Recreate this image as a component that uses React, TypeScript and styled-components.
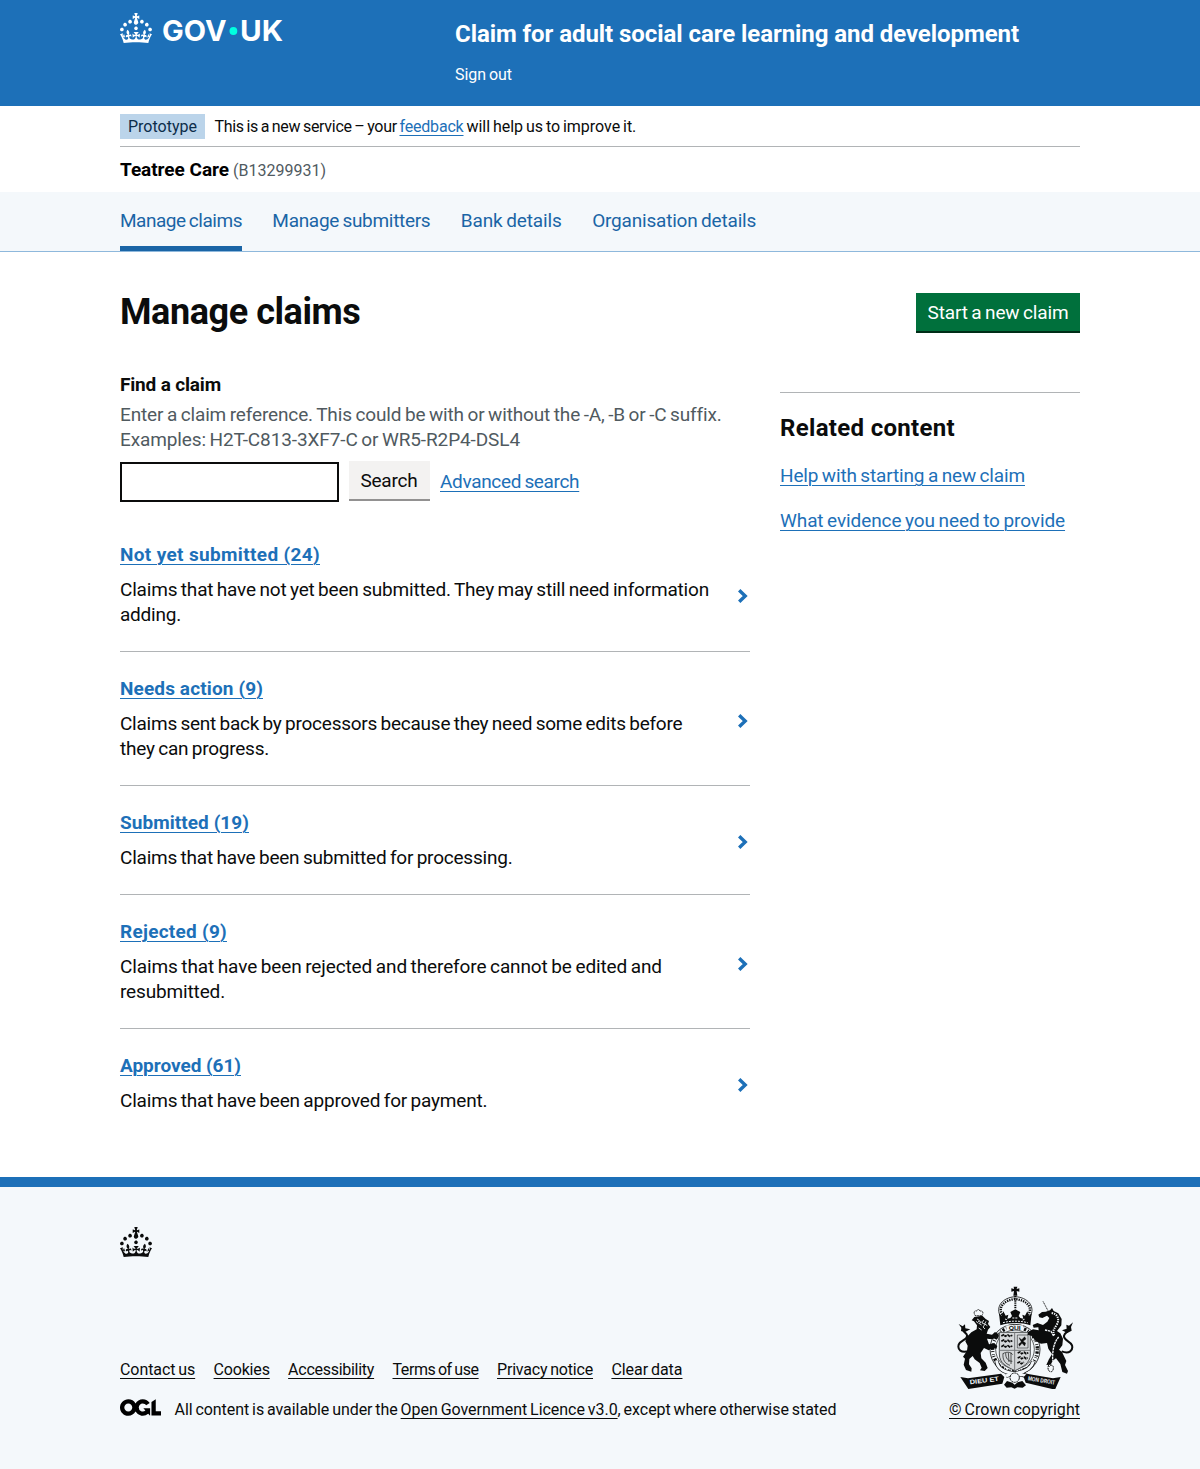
import React from "react";
import styled, { createGlobalStyle } from "styled-components";

const Global = createGlobalStyle`
  * { box-sizing: border-box; }
  body { margin: 0; background: #fff; color: #0b0c0c; font-family: Roboto, "Liberation Sans", sans-serif; font-size: 19px; line-height: 25px; }
  h1, h2, p, ul { margin: 0; padding: 0; }
  ul { list-style: none; }
`;

const Tracked = styled.span<{ $ls: number; $ws: number }>`
  letter-spacing: ${p => p.$ls}px;
  word-spacing: ${p => p.$ws}px;
  white-space: pre;
`;
const T = ({ ls = 0, ws = -1, children }: { ls?: number; ws?: number; children: string }) => (
  <Tracked $ls={ls} $ws={ws}>{children}</Tracked>
);

const Container = styled.div`
  width: 960px;
  margin: 0 auto;
`;
const Header = styled.header`
  background: #1d70b8;
  height: 106px;
  color: #fff;
`;
const HeaderRow = styled(Container)`
  display: grid;
  grid-template-columns: 335px 1fr;
`;
const Brand = styled.a`
  display: flex;
  align-items: flex-start;
  padding-top: 13px;
  color: #fff;
`;
const Wordmark = styled.svg`
  overflow: visible;
`;
const ServiceName = styled.p`
  font-size: 24px;
  line-height: 30px;
  font-weight: 700;
  padding-top: 19px;
`;
const SignOut = styled.p`
  font-size: 16px;
  line-height: 20px;
  margin-top: 16px;
`;
const Phase = styled(Container)`
  display: flex;
  align-items: flex-start;
  height: 41px;
  padding-top: 8px;
  border-bottom: 1px solid #b1b4b6;
  font-size: 16px;
`;
const Tag = styled.strong`
  background: #bbd4ea;
  color: #0c2d4a;
  font-weight: 400;
  width: 85px;
  height: 25px;
  padding-left: 8px;
  margin-right: 9.5px;
`;
const Link = styled.a`
  color: #1d70b8;
  text-decoration: underline;
  text-decoration-thickness: 1px;
  text-underline-offset: 3px;
`;
const Org = styled(Container)`
  height: 45px;
  padding-top: 10px;
  display: flex;
  align-items: baseline;
`;
const OrgName = styled.strong`
  font-weight: 700;
  color: #000;
  margin-right: 4px;
`;
const OrgCode = styled.span`
  font-size: 16px;
  color: #505a5f;
`;
const Nav = styled.nav`
  height: 60px;
  background: #f4f8fb;
  border-bottom: 1px solid #8eb8dc;
`;
const NavList = styled(Container)`
  display: flex;
  gap: 30.4px;
  height: 59px;
`;
const NavItem = styled.a<{ $active?: boolean }>`
  color: #1a65a6;
  padding-top: 16px;
  border-bottom: ${p => (p.$active ? "5px solid #1a65a6" : "0")};
`;
const Main = styled(Container)`
  height: 925px;
`;
const TitleRow = styled.div`
  display: flex;
  justify-content: space-between;
  padding-top: 40px;
  height: 120px;
`;
const H1 = styled.h1`
  font-size: 36px;
  line-height: 40px;
`;
const StartButton = styled.button`
  border: 0;
  background: #00703c;
  color: #fff;
  font: inherit;
  width: 164px;
  height: 38px;
  margin-top: 1px;
  padding: 0;
  box-shadow: 0 2px 0 #002d18;
`;
const Columns = styled.div`
  display: grid;
  grid-template-columns: 630px 300px;
  gap: 30px;
`;
const Label = styled.label`
  display: block;
  font-weight: 700;
`;
const Hint = styled.p`
  color: #505a5f;
  margin: 5px 0 9px;
`;
const SearchRow = styled.div`
  display: flex;
  gap: 10px;
  height: 41px;
`;
const Input = styled.input`
  width: 219px;
  height: 40px;
  margin-top: 1px;
  border: 2px solid #0b0c0c;
  border-radius: 0;
  padding: 5px;
`;
const SearchButton = styled.button`
  border: 0;
  background: #f3f2f1;
  color: #0b0c0c;
  font: inherit;
  width: 81px;
  height: 38px;
  padding: 0 1px 0 0;
  box-shadow: 0 2px 0 #929191;
`;
const Advanced = styled.div`
  padding-top: 8px;
`;
const Chevron = styled.svg`
  margin-top: 2px;
`;
const List = styled.ul`
  margin-top: 40px;
`;
const Item = styled.li`
  display: flex;
  justify-content: space-between;
  align-items: center;
  padding: 24px 1px 24px 0;
  border-bottom: 1px solid #b1b4b6;
  &:first-child { padding-top: 0; }
  &:first-child ${Chevron} { margin-top: 22px; }
  &:nth-child(n + 2) ${Chevron} { margin-top: 4px; }
  &:last-child { border-bottom: 0; }
`;
const ItemTitle = styled.h2`
  font-size: 19px;
  line-height: 25px;
  margin-bottom: 10px;
`;
const Related = styled.aside`
  margin-top: 20px;
  border-top: 1px solid #b1b4b6;
`;
const RelatedTitle = styled.h2`
  font-size: 24px;
  line-height: 30px;
  padding-top: 20px;
  margin-bottom: 20px;
`;
const RelatedLink = styled.p`
  margin-bottom: 20px;
`;
const Footer = styled.footer`
  background: #f4f8fb;
  border-top: 10px solid #1d70b8;
  height: 292px;
  padding-top: 40px;
  font-size: 16px;
  line-height: 20px;
`;
const FooterCrown = styled(Container)`
  display: flex;
`;
const FooterRow = styled(Container)`
  display: flex;
  justify-content: space-between;
  align-items: flex-end;
  height: 163px;
`;
const FooterLinks = styled.div`
  display: flex;
  gap: 18.4px;
  margin-bottom: 20px;
`;
const FooterLink = styled(Link)`
  color: #0b0c0c;
`;
const Licence = styled.div`
  display: flex;
`;
const OglMark = styled.svg`
  margin: -1px 13.5px 0 0;
`;
const Copyright = styled.div`
  display: flex;
  flex-direction: column;
  align-items: flex-end;
`;
const CrestMark = styled.svg`
  display: block;
  margin: 0 6px 11px 0;
`;

const Crown = () => (
  <svg width="32" height="30" viewBox="0 0 32 30" fill="currentColor" aria-hidden="true">
    <path fillRule="evenodd" d="M22.6 10.4c-1 .4-2-.1-2.4-1-.4-.9.1-2 1-2.4.9-.4 2 .1 2.4 1s-.1 2-1 2.4m-5.9 6.7c-.9.4-2-.1-2.4-1-.4-.9.1-2 1-2.4.9-.4 2 .1 2.4 1s-.1 2-1 2.4m10.8-3.7c-1 .4-2-.1-2.4-1-.4-.9.1-2 1-2.4.9-.4 2 .1 2.4 1s0 2-1 2.4m3.3 4.8c-1 .4-2-.1-2.4-1-.4-.9.1-2 1-2.4.9-.4 2 .1 2.4 1s-.1 2-1 2.4M17 4.7l2.3 1.2V2.5l-2.3.7-.2-.2.9-3h-3.4l.9 3-.2.2c-.1.1-2.3-.7-2.3-.7v3.4L15 4.7c.1.1.1.2.2.2l-1.3 4c-.1.2-.1.4-.1.6 0 1.1.8 2 1.9 2.2h.7c1-.2 1.9-1.1 1.9-2.1 0-.2 0-.4-.1-.6l-1.3-4c-.1-.2 0-.2.1-.3m-7.6 5.7c.9.4 2-.1 2.4-1 .4-.9-.1-2-1-2.4-.9-.4-2 .1-2.4 1s0 2 1 2.4m-5 3c.9.4 2-.1 2.4-1 .4-.9-.1-2-1-2.4-.9-.4-2 .1-2.4 1s.1 2 1 2.4m-3.2 4.8c.9.4 2-.1 2.4-1 .4-.9-.1-2-1-2.4-.9-.4-2 .1-2.4 1s0 2 1 2.4m14.8 11c4.4 0 8.6.3 12.3.8 1.1-4.5 2.4-7 3.7-8.8l-2.5-.9c.2 1.3.3 1.9 0 2.7-.4-.4-.8-1.1-1.1-2.3l-1.2 4c.7-.5 1.3-.8 2-.9-1.1 2.5-2.6 3.1-3.5 3-1.1-.2-1.7-1.2-1.5-2.1.3-1.2 1.5-1.5 2.1-.1 1.1-2.3-.8-3-2-2.3 1.9-1.9 2.1-3.5.6-5.6-2.1 1.6-2.1 3.2-1.2 5.5-1.2-1.4-3.2-.6-2.5 1.6.9-1.4 2.1-.5 1.9.8-.2 1.1-1.7 2.1-3.5 1.9-2.7-.2-2.9-2.1-2.9-3.6.7-.1 1.9.5 2.9 1.9l.4-4.3c-1.1 1.1-2.1 1.4-3.2 1.4.4-1.2 2.1-3 2.1-3h-5.4s1.7 1.9 2.1 3c-1.1 0-2.1-.2-3.2-1.4l.4 4.3c1-1.4 2.2-2 2.9-1.9-.1 1.5-.2 3.4-2.9 3.6-1.9.2-3.4-.8-3.5-1.9-.2-1.3 1-2.2 1.9-.8.7-2.3-1.2-3-2.5-1.6.9-2.2.9-3.9-1.2-5.5-1.5 2-1.3 3.7.6 5.6-1.2-.7-3.1 0-2 2.3.6-1.4 1.8-1.1 2.1.1.2.9-.3 1.9-1.5 2.1-.9.2-2.4-.5-3.5-3 .6 0 1.2.3 2 .9l-1.2-4c-.3 1.1-.7 1.9-1.1 2.3-.3-.8-.2-1.4 0-2.7l-2.9.9C1.3 23 2.6 25.5 3.7 30c3.7-.5 7.9-.8 12.3-.8" />
  </svg>
);

const Crest = () => (
  <CrestMark width="117" height="103" viewBox="36 18 351 309" fill="#0b0c0c" aria-hidden="true">
    {/* imperial crown */}
    <path d="M206 20h11l-2 7 8-2v10l-8-2 2 14h-12l2-14-8 2V25l8 2z" />
    <g fill="none" stroke="#0b0c0c">
      <path d="M168 112C148 80 174 52 211 50c37 2 63 30 43 62" strokeWidth="2.5" />
      <path d="M172 104C157 80 180 60 211 57c31 3 54 23 39 47" strokeWidth="7" strokeDasharray="4 3" />
      <path d="M211 48v38" strokeWidth="6" strokeDasharray="4 2.5" />
    </g>
    <path d="M166 136l-4-36 8 7 5-13 7 13 8-3-3 12 9-2 5-6-5-12 15-8 15 8-5 12 5 6 9 2-3-12 8 3 7-13 5 13 8-7-4 36c-28-9-62-9-90 0z" />
    <path d="M174 128c24-6 50-6 74 0M180 117l8 3M233 120l8-3M202 114h18" fill="none" stroke="#f4f8fb" strokeWidth="3" strokeDasharray="6 3" />
    {/* garter and shield */}
    <circle cx="210" cy="208" r="75" fill="#f4f8fb" stroke="#0b0c0c" strokeWidth="2.5" />
    <circle cx="210" cy="208" r="67" fill="none" stroke="#0b0c0c" strokeWidth="10" strokeDasharray="2.5 4 7 5 3 3 2 7" />
    <path d="M184 136h50v17h-50z" fill="#f4f8fb" />
    <circle cx="210" cy="208" r="58" fill="#f4f8fb" stroke="#0b0c0c" strokeWidth="2" />
    <path d="M163 157h93v65c0 28-22 38-46 50-25-12-47-22-47-50z" fill="#d5d8da" stroke="#505355" strokeWidth="3" />
    <path d="M209 157v115M163 211h93" stroke="#777b7d" strokeWidth="3" />
    <g fill="none" stroke="#0b0c0c">
      <path d="M169 168l7-4 5 5 8-4 5 4 8-3M169 184l7-4 5 5 8-4 5 4 8-3M169 200l7-4 5 5 8-4 5 4 8-3" strokeWidth="5" strokeDasharray="9 2" />
      <path d="M218 219l7-3 5 5 8-4 5 4 7-3M218 234l7-3 5 5 8-4 5 4 5-3M217 249l7-3 5 5 8-4" strokeWidth="5" strokeDasharray="9 2" />
      <path d="M217 165h32v39h-32z" strokeWidth="1.5" />
      <path d="M222 173l8 6 9-9 4 7-9 7 8 5-3 9-8-8-8 9-2-7 8-6z" fill="#0b0c0c" strokeWidth="1" />
      <path d="M174 220c-2 21 7 31 21 36M182 219c0 17 7 24 20 25M190 218l2 28M198 218v34M174 221c10-7 24-5 29 3" strokeWidth="2" />
    </g>
    {/* lion supporter */}
    <path d="M91 107c-7-10-3-16 4-14l5-6 5 6c9-1 12 6 5 14z" fill="#f4f8fb" stroke="#0b0c0c" strokeWidth="3" strokeDasharray="3 1.6" />
    <path d="M88 111l24-4 10 10 10 6-3 9 7 9-7 8-4 12 16 3 9-8 11 7-1 13-8-4-9 6-17-2 6 17 16-3 9 8-3 8-10-2-13 7-14-7-10 15 2 16 13 13 6 16-9 9-14-2 5-8-6-14-15-11-6-10-10 9-1 16 8 12-1 10-16-5-7-16 4-18-6-6 12-18 2-15-7-13 5-14 13-13 16-9 1-12-9-12-7-3z" />
    <path d="M96 117l7 4-3 4 9 1-6 5 7 4M116 120l-5 9 9 4-6 8 6 6M101 144l9 6M123 124l-4 8 8 5M93 124l7 6" fill="none" stroke="#f4f8fb" strokeWidth="2.5" />
    <path d="M72 213c-24 7-35-4-31-19 4-13 28-14 25-28-2-10-13-7-10-18" fill="none" stroke="#0b0c0c" strokeWidth="6" />
    <path d="M41 132l12 7 7-6 1 12 15 3-17 9-11-4 1-10z" />
    {/* unicorn supporter */}
    <path d="M294 64l17 32" stroke="#0b0c0c" strokeWidth="2.5" strokeDasharray="4 1.5" />
    <path d="M302 95l13-4 6-7 5 9 14 7 10 17-1 19-13 17 10 7 8 16-2 20-10 13 9 7 13 27-4 12 9 18-3 8-14-5-6-24-13-17-10 7-6 12-13 1 7-16 10-17-11-16-4-17-18 2-16-8-11-15-14-4 2-8 15-8 17 3-1-9-14 1-3-8 14-6 17 6 13-10 6-11-7-7-14 7-9-2-3-8 11-8z" />
    <path d="M320 99c18 3 24 18 16 34-7 13-15 17-8 33" fill="none" stroke="#f4f8fb" strokeWidth="6" strokeDasharray="4 3" />
    <path d="M300 150l18 4 8 14M341 171c-14 17-19 38-18 71" fill="none" stroke="#f4f8fb" strokeWidth="4" strokeDasharray="7 2" />
    <path d="M350 214c23 9 35-3 31-18-4-13-27-15-24-29 3-13 16-9 15-23" fill="none" stroke="#0b0c0c" strokeWidth="6" />
    <path d="M384 127l-12 10-8-3 1 12-14 5 16 8 13-7-2-11z" />
    <path d="M316 240l-6 18c-6 17 14 25 15 7 1-10-8-13-12-5" fill="none" stroke="#0b0c0c" strokeWidth="3" strokeDasharray="6 2" />
    {/* motto ribbon */}
    <path d="M155 242c1 20 19 34 48 38l27 4 20 5M265 244c-5 19-22 30-47 35l-35 8" fill="none" stroke="#0b0c0c" strokeWidth="13" />
    <path d="M155 242c1 20 19 34 48 38l27 4 20 5M265 244c-5 19-22 30-47 35l-35 8" fill="none" stroke="#f4f8fb" strokeWidth="9" />
    <path d="M46 291l23 4 99-14 10 10-6 20-102 16zM347 291l-23 4-79-14-9 10 6 17 88 21z" />
    <text x="75" y="313" transform="rotate(-7 75 313)" fill="#f4f8fb" fontFamily="Liberation Sans, sans-serif" fontWeight="700" fontSize="19" textLength="88" lengthAdjust="spacingAndGlyphs">DIEU ET</text>
    <text x="248" y="301" transform="rotate(9 248 301)" fill="#f4f8fb" fontFamily="Liberation Sans, sans-serif" fontWeight="700" fontSize="18" textLength="82" lengthAdjust="spacingAndGlyphs">MON DROIT</text>
    <text x="191" y="151" fill="#0b0c0c" fontFamily="Liberation Sans, sans-serif" fontWeight="700" fontSize="17" textLength="36" lengthAdjust="spacingAndGlyphs">QUI</text>
    <circle cx="209" cy="293" r="14" fill="#f4f8fb" stroke="#0b0c0c" strokeWidth="3" strokeDasharray="7 2" />
    <path d="M177 314l9-11 16 5 7 6 9-7 14-4 11 13-10 7-16-1-8 4-10-4-14 1z" />
  </CrestMark>
);

type Line = [text: string, tracking: number];
const items: { title: Line; lines: Line[] }[] = [
  { title: ["Not yet submitted (24)", 0.347], lines: [["Claims that have not yet been submitted. They may still need information", -0.186], ["adding.", -0.223]] },
  { title: ["Needs action (9)", 0.128], lines: [["Claims sent back by processors because they need some edits before", -0.245], ["they can progress.", -0.233]] },
  { title: ["Submitted (19)", 0.059], lines: [["Claims that have been submitted for processing.", -0.215]] },
  { title: ["Rejected (9)", 0.26], lines: [["Claims that have been rejected and therefore cannot be edited and", -0.112], ["resubmitted.", -0.151]] },
  { title: ["Approved (61)", -0.031], lines: [["Claims that have been approved for payment.", -0.195]] },
];
const footerLinks: Line[] = [
  ["Contact us", -0.08], ["Cookies", -0.18], ["Accessibility", -0.273],
  ["Terms of use", -0.42], ["Privacy notice", -0.186], ["Clear data", -0.05],
];

export default function App() {
  return (
    <>
      <Global />
      <Header>
        <HeaderRow>
          <Brand>
            <Crown />
            <Wordmark width="140" height="42" viewBox="0 0 140 42" fill="#fff">
              <g fontFamily='Inter, "Liberation Sans", sans-serif' fontWeight="650" fontSize="29">
                <text x="10" y="28.4" textLength="64.5" lengthAdjust="spacingAndGlyphs">GOV</text>
                <text x="88" y="28.4" textLength="43" lengthAdjust="spacingAndGlyphs">UK</text>
              </g>
              <circle cx="81.4" cy="18" r="3.9" fill="#00ffe0" />
            </Wordmark>
          </Brand>
          <div>
            <ServiceName><T ls={-0.068} ws={0}>Claim for adult social care learning and development</T></ServiceName>
            <SignOut><T ls={-0.05}>Sign out</T></SignOut>
          </div>
        </HeaderRow>
      </Header>
      <Phase>
        <Tag><T>Prototype</T></Tag>
        <T ls={-0.297}>{"This is a new service – your "}</T>
        <Link><T ls={-0.193}>feedback</T></Link>
        <T ls={-0.03}>{" will help us to improve it."}</T>
      </Phase>
      <Org>
        <OrgName><T ls={-0.038} ws={0}>Teatree Care</T></OrgName>
        <OrgCode><T>(B13299931)</T></OrgCode>
      </Org>
      <Nav>
        <NavList>
          <NavItem $active><T ls={-0.48}>Manage claims</T></NavItem>
          <NavItem><T ls={-0.306}>Manage submitters</T></NavItem>
          <NavItem><T ls={-0.117}>Bank details</T></NavItem>
          <NavItem><T ls={-0.195}>Organisation details</T></NavItem>
        </NavList>
      </Nav>
      <Main as="main">
        <TitleRow>
          <H1><T ls={-0.43} ws={0}>Manage claims</T></H1>
          <StartButton><T ls={-0.147}>Start a new claim</T></StartButton>
        </TitleRow>
        <Columns>
          <section>
            <Label><T ls={-0.167} ws={0}>Find a claim</T></Label>
            <Hint>
              <T ls={-0.14}>Enter a claim reference. This could be with or without the -A, -B or -C suffix.</T>
              <br />
              <T ls={-0.11}>Examples: H2T-C813-3XF7-C or WR5-R2P4-DSL4</T>
            </Hint>
            <SearchRow>
              <Input />
              <SearchButton><T ls={-0.2}>Search</T></SearchButton>
              <Advanced><Link><T ls={-0.34}>Advanced search</T></Link></Advanced>
            </SearchRow>
            <List>
              {items.map(({ title, lines }) => (
                <Item key={title[0]}>
                  <div>
                    <ItemTitle><Link><T ls={title[1]} ws={0}>{title[0]}</T></Link></ItemTitle>
                    {lines.map(([text, ls]) => <p key={text}><T ls={ls}>{text}</T></p>)}
                  </div>
                  <Chevron width="12" height="16" viewBox="0 0 12 16">
                    <path d="M2.2 2.2 L8.2 8 L2.2 13.8" fill="none" stroke="#1d70b8" strokeWidth="3.4" />
                  </Chevron>
                </Item>
              ))}
            </List>
          </section>
          <Related>
            <RelatedTitle><T ls={0.317} ws={0}>Related content</T></RelatedTitle>
            <RelatedLink><Link><T ls={-0.157}>Help with starting a new claim</T></Link></RelatedLink>
            <RelatedLink><Link><T ls={-0.094}>What evidence you need to provide</T></Link></RelatedLink>
          </Related>
        </Columns>
      </Main>
      <Footer>
        <FooterCrown><Crown /></FooterCrown>
        <FooterRow>
          <div>
            <FooterLinks>
              {footerLinks.map(([text, ls]) => <FooterLink key={text}><T ls={ls}>{text}</T></FooterLink>)}
            </FooterLinks>
            <Licence>
              <OglMark width="41" height="17" viewBox="0 0 483.2 195.7">
                <path d="M421.5 142.8V.1l-50.7 32.3v161.1h112.4v-50.7zm-122.3-9.6A47.12 47.12 0 0 1 221 97.8c0-26 21.1-47.1 47.1-47.1 16.7 0 31.4 8.7 39.7 21.8l42.7-27.2A97.63 97.63 0 0 0 268.1 0c-36.5 0-68.3 20.1-85.1 49.7A98 98 0 0 0 97.8 0C43.9 0 0 43.9 0 97.8s43.9 97.8 97.8 97.8c36.5 0 68.3-20.1 85.1-49.7a97.76 97.76 0 0 0 149.6 25.4l19.4 22.2h3v-87.8h-80l24.3 27.5zM97.8 145c-26 0-47.1-21.1-47.1-47.1s21.1-47.1 47.1-47.1 47.1 21.1 47.1 47.1S123.8 145 97.8 145" />
              </OglMark>
              <T ls={-0.06}>{"All content is available under the "}</T>
              <FooterLink><T ls={-0.04}>Open Government Licence v3.0</T></FooterLink>
              <T ls={-0.045}>, except where otherwise stated</T>
            </Licence>
          </div>
          <Copyright>
            <Crest />
            <FooterLink><T ls={0.03}>© Crown copyright</T></FooterLink>
          </Copyright>
        </FooterRow>
      </Footer>
    </>
  );
}
